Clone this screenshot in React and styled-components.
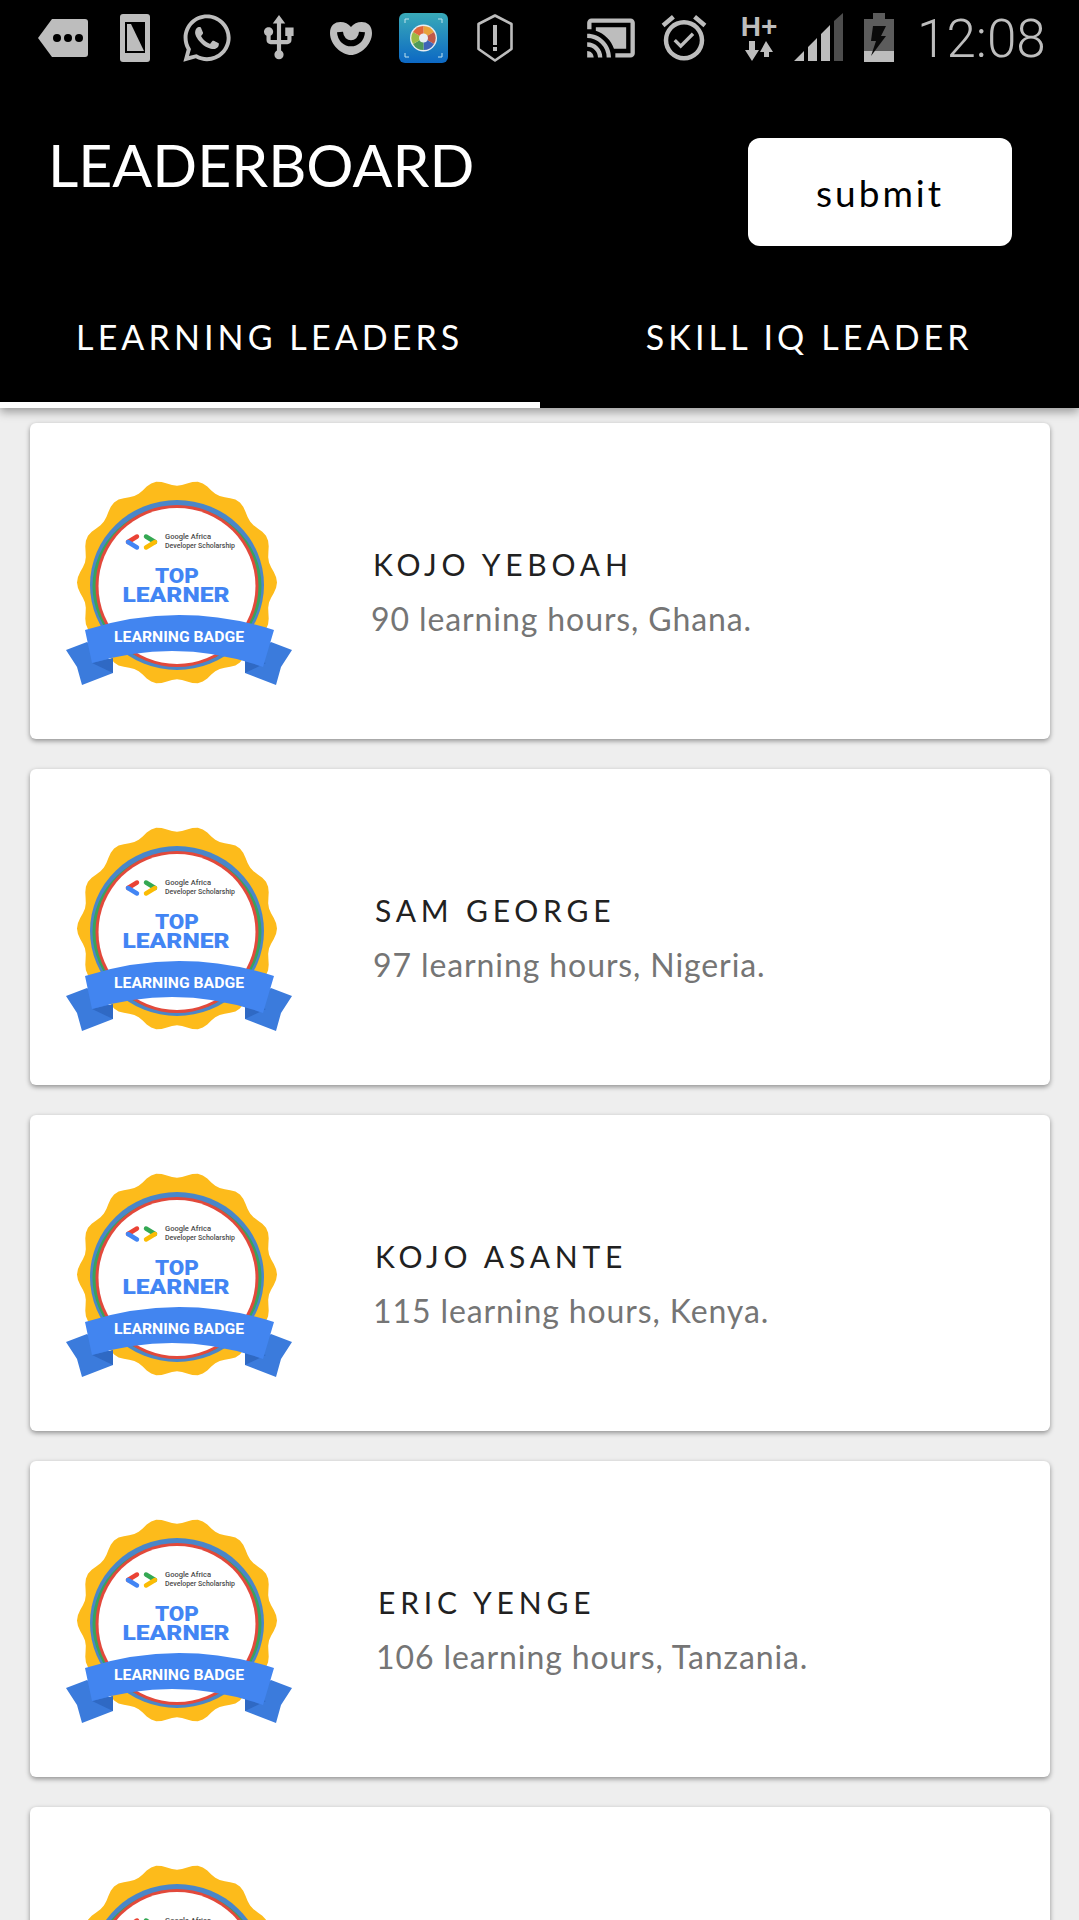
import React from "react";
import styled, { createGlobalStyle } from "styled-components";
import { FaWhatsapp } from "react-icons/fa";
import { MdUsb, MdCastConnected, MdOutlineAlarmOn } from "react-icons/md";

const leaders = [
  { name: "KOJO YEBOAH", details: "90 learning hours, Ghana.", indent: 0 },
  { name: "SAM GEORGE", details: "97 learning hours, Nigeria.", indent: 2 },
  { name: "KOJO ASANTE", details: "115 learning hours, Kenya.", indent: 2 },
  { name: "ERIC YENGE", details: "106 learning hours, Tanzania.", indent: 5 },
  { indent: 0 },
];

const scallopPath = (() => {
  const points = [];
  for (let i = 0; i < 360; i += 3) {
    const a = (i * Math.PI) / 180;
    const r = 97 - 3 * Math.cos(14 * a);
    points.push(`${(127 + r * Math.sin(a)).toFixed(1)} ${(112.500 - 1.03 * r * Math.cos(a)).toFixed(1)}`);
  }
  return `M${points.join("L")}Z`;
})();

const Badge = () => (
  <BadgeArt viewBox="0 0 260 230">
    <path d={scallopPath} fill="#fdbb1b" />
    <ellipse cx="127" cy="115" rx="87" ry="85" fill="#4a86c9" />
    <ellipse cx="127" cy="116" rx="84.5" ry="80" fill="#3aa35c" />
    <ellipse cx="127" cy="116" rx="81.5" ry="81" fill="#e2493b" />
    <ellipse cx="127" cy="116" rx="78.5" ry="78" fill="#fff" />
    <g fill="none" strokeWidth="4.4" strokeLinecap="round">
      <path d="M87 66.5 L78 72" stroke="#ea4335" />
      <path d="M78 72 L87 77.5" stroke="#4285f4" />
      <path d="M96 66.5 L105 72" stroke="#34a853" />
      <path d="M105 72 L96 77.5" stroke="#fbbc04" />
    </g>
    <BadgeSmall x="115" y="68.5" textLength="46" lengthAdjust="spacingAndGlyphs">
      Google Africa
    </BadgeSmall>
    <BadgeSmall x="115" y="78" textLength="70" lengthAdjust="spacingAndGlyphs">
      Developer Scholarship
    </BadgeSmall>
    <BadgeTitle x="127" y="113" textAnchor="middle" fontSize="21" textLength="44" lengthAdjust="spacingAndGlyphs">
      TOP
    </BadgeTitle>
    <BadgeTitle x="126" y="132" textAnchor="middle" fontSize="21" textLength="107" lengthAdjust="spacingAndGlyphs">
      LEARNER
    </BadgeTitle>
    <path d="M16 180 L37 172 L63 192 L63 203 L32 215 L27 197 Z" fill="#3b7bdc" />
    <path d="M242 180 L221 172 L195 192 L195 203 L226 215 L231 197 Z" fill="#3b7bdc" />
    <path d="M42 193 L63 203 L63 188 Z" fill="#2f69c4" />
    <path d="M216 193 L195 203 L195 188 Z" fill="#2f69c4" />
    <path d="M35 160 Q129 130 224 160 L213 197 Q129 167 42 193 Z" fill="#4285f0" />
    <BadgeRibbonText x="129" y="172" textAnchor="middle" textLength="130" lengthAdjust="spacingAndGlyphs">
      LEARNING BADGE
    </BadgeRibbonText>
  </BadgeArt>
);

const StatusBar = () => (
  <Status>
    <Icon $gap={38} width="50" height="40" viewBox="0 0 50 40">
      <path d="M14 1 H47 a3 3 0 0 1 3 3 V36 a3 3 0 0 1 -3 3 H14 L0 20 Z" fill="#bdbdbd" />
      <circle cx="19" cy="20" r="4" fill="#000" />
      <circle cx="30" cy="20" r="4" fill="#000" />
      <circle cx="41" cy="20" r="4" fill="#000" />
    </Icon>
    <Icon $gap={32} width="30" height="48" viewBox="0 0 30 48">
      <rect width="30" height="48" rx="3" fill="#bdbdbd" />
      <rect x="5" y="8" width="20" height="31" fill="#000" />
      <path d="M7 10 H11 L24 37 H7 Z" fill="#bdbdbd" />
    </Icon>
    <WhatsApp />
    <UsbIcon />
    <Icon $gap={26} width="42" height="34" viewBox="0 0 42 34">
      <path d="M21 6 C26 -1 42 -2 42 12 C42 24 30 34 21 34 C12 34 0 24 0 12 C0 -2 16 -1 21 6 Z" fill="#bdbdbd" />
      <path d="M10 11 C11 26 31 26 32 11" fill="none" stroke="#000" strokeWidth="6" />
    </Icon>
    <Icon $gap={27} width="49" height="50" viewBox="0 0 49 50">
      <defs>
        <linearGradient id="photoBg" x1="0" y1="0" x2="0" y2="1">
          <stop offset="0" stopColor="#39aab8" />
          <stop offset="1" stopColor="#0c68c4" />
        </linearGradient>
      </defs>
      <rect width="49" height="50" rx="6" fill="url(#photoBg)" />
      <path d="M6 10 V6 H10 M39 6 H43 V10 M6 40 V44 H10 M39 44 H43 V40" fill="none" stroke="#bfe3ee" strokeWidth="1" />
      <circle cx="24.500" cy="25" r="13.500" fill="#e8eef2" />
      <path d="M24.500 25 L24.500 13 A12 12 0 0 1 35 19 Z" fill="#e8a33a" />
      <path d="M24.500 25 L35 19 A12 12 0 0 1 35 31 Z" fill="#c05a4a" />
      <path d="M24.500 25 L35 31 A12 12 0 0 1 24.500 37 Z" fill="#3f64b8" />
      <path d="M24.500 25 L24.500 37 A12 12 0 0 1 14 31 Z" fill="#4f9a5a" />
      <path d="M24.500 25 L14 31 A12 12 0 0 1 14 19 Z" fill="#9dbb46" />
      <path d="M24.500 25 L14 19 A12 12 0 0 1 24.500 13 Z" fill="#e0663c" />
      <circle cx="24.500" cy="25" r="4.500" fill="#e8eef2" />
    </Icon>
    <Icon $gap={29} width="36" height="48" viewBox="0 0 36 48">
      <path d="M18 1.500 L34.500 10 V35 L18 46.500 L1.500 35 V10 Z" fill="none" stroke="#bdbdbd" strokeWidth="2.600" strokeLinejoin="round" />
      <rect x="16" y="11" width="4" height="20" fill="#bdbdbd" />
      <rect x="16" y="33" width="4" height="4" fill="#bdbdbd" />
    </Icon>
    <CastIcon />
    <AlarmIcon />
    <NetworkType>
      <span>H+</span>
      <svg width="28" height="22" viewBox="0 0 28 22">
        <path d="M4 1 H10 V10 H14 L7 21 L0 10 H4 Z M19 12 H15 L21 1 L28 12 H24 V17 H19 Z" fill="#bdbdbd" />
      </svg>
    </NetworkType>
    <Icon $gap={16} width="49" height="49" viewBox="0 0 49 49">
      <path d="M0 48 L10 38 V48 Z M14 48 V34 L23 25 V48 Z M27 48 V21 L36 12 V48 Z" fill="#bdbdbd" />
      <path d="M40 48 V8 L49 0 V48 Z" fill="#4d4d4d" />
    </Icon>
    <Icon $gap={21} width="30" height="49" viewBox="0 0 30 49">
      <rect x="9" width="12" height="6" fill="#5c5c5c" />
      <rect y="6" width="30" height="32" fill="#5c5c5c" />
      <rect y="38" width="30" height="11" fill="#bdbdbd" />
      <path d="M9 13 H22 L17 23 H22 L7 43 L12 28 H7 Z" fill="#0a0a0a" />
    </Icon>
    <Clock>12:08</Clock>
  </Status>
);

const App = () => (
  <Page>
    <GlobalStyle />
    <Header>
      <StatusBar />
      <TitleRow>
        <Title>LEADERBOARD</Title>
        <SubmitButton>submit</SubmitButton>
      </TitleRow>
      <Tabs>
        <Tab $active>LEARNING LEADERS</Tab>
        <Tab>SKILL IQ LEADER</Tab>
      </Tabs>
    </Header>
    <List>
      {leaders.map((leader, i) => (
        <Card key={i}>
          <Badge />
          {leader.name && (
            <Info $indent={leader.indent}>
              <Name>{leader.name}</Name>
              <Details>{leader.details}</Details>
            </Info>
          )}
        </Card>
      ))}
    </List>
  </Page>
);

export default App;

const GlobalStyle = createGlobalStyle`
  html, body {
    margin: 0;
    padding: 0;
    background: #eeeeee;
  }
`;

const Page = styled.div`
  width: 1079px;
  height: 1920px;
  overflow: hidden;
  background: #eeeeee;
  font-family: "Lato", "Liberation Sans", sans-serif;
`;

const Header = styled.header`
  position: relative;
  z-index: 1;
  background: #000;
  height: 408px;
  box-shadow: 0 4px 9px rgba(0, 0, 0, 0.35);
`;

const Status = styled.div`
  display: flex;
  align-items: center;
  height: 75px;
  color: #bdbdbd;
`;

const Icon = styled.svg`
  flex: none;
  margin-left: ${({ $gap }) => $gap}px;
`;

const WhatsApp = styled(FaWhatsapp)`
  flex: none;
  margin-left: 30px;
  width: 54px;
  height: 54px;
`;

const UsbIcon = styled(MdUsb)`
  flex: none;
  margin-left: 20px;
  width: 50px;
  height: 50px;
`;

const CastIcon = styled(MdCastConnected)`
  flex: none;
  margin-left: 72px;
  width: 52px;
  height: 52px;
`;

const AlarmIcon = styled(MdOutlineAlarmOn)`
  flex: none;
  margin-left: 20px;
  width: 54px;
  height: 54px;
`;

const NetworkType = styled.div`
  flex: none;
  display: flex;
  flex-direction: column;
  align-items: center;
  margin-left: 29px;
  width: 38px;
  font: bold 28px/26px "Liberation Sans", sans-serif;
`;

const Clock = styled.div`
  margin-left: 23px;
  padding-top: 3px;
  font-family: "Roboto", sans-serif;
  font-size: 53px;
  font-weight: 300;
  line-height: 1;
`;

const TitleRow = styled.div`
  display: flex;
  justify-content: space-between;
  align-items: flex-start;
  height: 205px;
  padding: 63px 67px 0 48px;
  box-sizing: border-box;
`;

const Title = styled.h1`
  margin: -9px 0 0;
  color: #fff;
  font-size: 59px;
  font-weight: 400;
  line-height: 72px;
`;

const SubmitButton = styled.button`
  width: 264px;
  height: 108px;
  border: 0;
  border-radius: 12px;
  background: #fff;
  color: #000;
  font-family: inherit;
  font-size: 37px;
  letter-spacing: 3px;
`;

const Tabs = styled.div`
  display: flex;
  height: 128px;
`;

const Tab = styled.div`
  flex: 1;
  display: flex;
  align-items: center;
  justify-content: center;
  padding-bottom: 10px;
  box-sizing: border-box;
  color: #fff;
  font-size: 34px;
  letter-spacing: 4.100px;
  border-bottom: 6px solid ${({ $active }) => ($active ? "#fff" : "#000")};
`;

const List = styled.div`
  display: flex;
  flex-direction: column;
  gap: 30px;
  padding: 15px 29px 0 30px;
`;

const Card = styled.div`
  flex: none;
  display: flex;
  align-items: flex-start;
  height: 316px;
  padding: 47px 0 0 20px;
  box-sizing: border-box;
  background: #fff;
  border-radius: 6px;
  box-shadow: 0 2px 5px rgba(0, 0, 0, 0.4);
`;

const BadgeArt = styled.svg`
  flex: none;
  width: 260px;
  height: 230px;
`;

const BadgeSmall = styled.text`
  font: 500 7px "Roboto", sans-serif;
  fill: #4a4a4a;
`;

const BadgeTitle = styled.text`
  font-family: "Roboto", sans-serif;
  font-weight: 900;
  fill: #4285f4;
`;

const BadgeRibbonText = styled.text`
  font: bold 14px "Roboto", sans-serif;
  fill: #fff;
`;

const Info = styled.div`
  margin: 74px 0 0 ${({ $indent }) => 61 + $indent}px;
`;

const Name = styled.div`
  margin-left: 2px;
  color: #212121;
  font-size: 30px;
  line-height: 40px;
  letter-spacing: 4.800px;
`;

const Details = styled.div`
  margin-top: 15px;
  color: #757575;
  font-size: 32px;
  line-height: 40px;
  letter-spacing: 0.900px;
`;
